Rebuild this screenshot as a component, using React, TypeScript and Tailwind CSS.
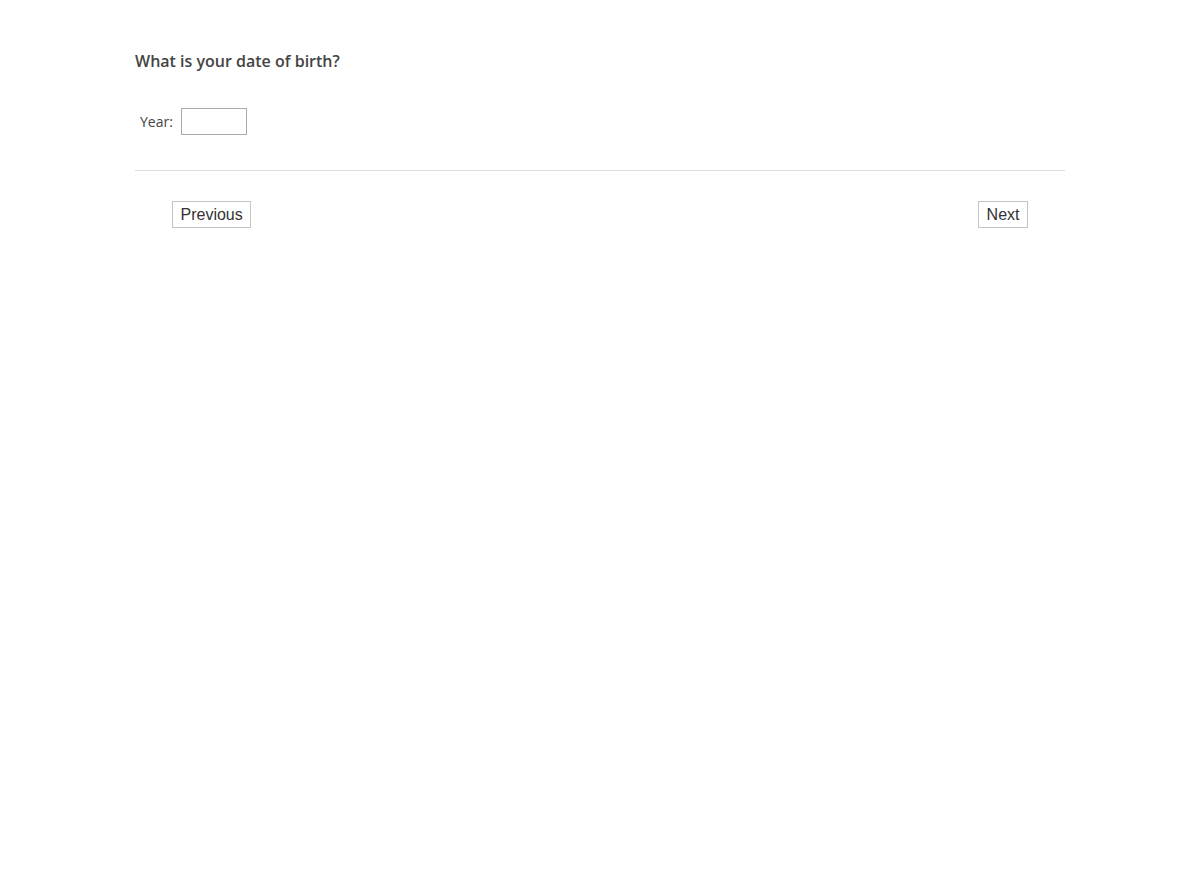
import { FC } from "react";

const App: FC = () => {
  return (
    <div className="min-h-[882px] bg-white font-['Open_Sans',sans-serif] text-[#444]">
      <div className="mx-auto w-[930px] pt-[50px]">
        <h2 className="text-[16px] leading-[22px] font-semibold text-[#444]">What is your date of birth?</h2>

        <div className="mt-[36px] flex items-center pl-[5px]">
          <label className="text-[14px] leading-[20px] text-[#444]">Year:</label>
          <input type="text" className="ml-[8px] h-[27px] w-[66px] border border-[#aaa] bg-white px-1 text-[14px] outline-none" />
        </div>

        <hr className="mt-[35px] border-0 border-t border-[#ddd]" />

        <div className="mt-[30px] flex justify-between px-[37px]">
          <button className="border border-[#c4c4c4] bg-white px-[7.5px] py-[3px] font-['Liberation_Sans',Arial,sans-serif] text-[16px] leading-[19px] text-[#333]">
            Previous
          </button>
          <button className="border border-[#c4c4c4] bg-white px-[7.5px] py-[3px] font-['Liberation_Sans',Arial,sans-serif] text-[16px] leading-[19px] text-[#333]">
            Next
          </button>
        </div>
      </div>
    </div>
  );
};

export default App;
